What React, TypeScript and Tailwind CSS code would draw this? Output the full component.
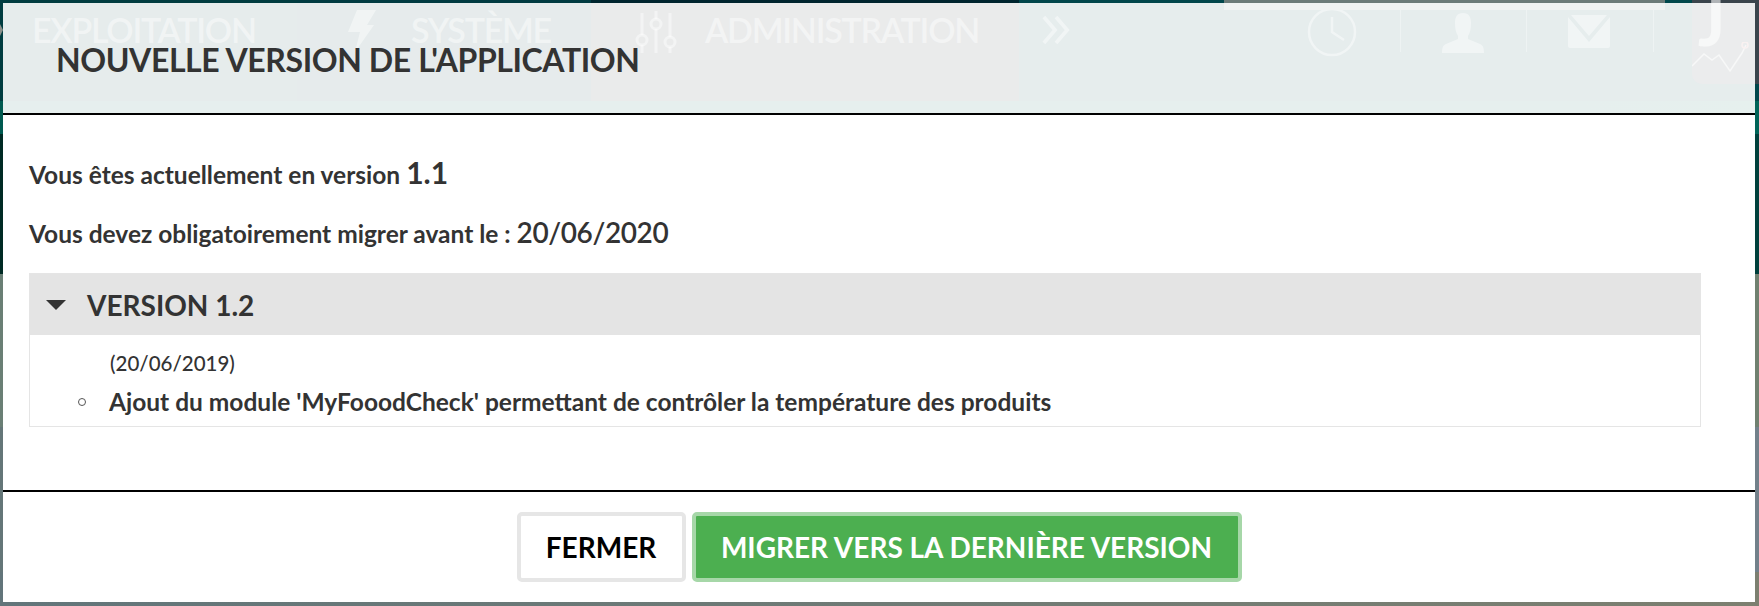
const navCellClass = 'flex items-start h-full';
const navTextClass = 'text-[34px] leading-[40px] tracking-[-1.25px] font-semibold';
const navSeparatorClass = 'mt-[10px] h-[42px] w-[1px] bg-white/35';

const BackgroundNav = () => (
  <div className="h-[101px] flex text-[rgba(255,255,255,0.45)] bg-[#00464b] relative">
    <span className="absolute left-0 top-[24px] w-0 h-0 border-y-[6px] border-y-transparent border-l-[3px] border-l-[#8a8f8a]" />
    <div className={`${navCellClass} w-[297px] pl-[32px] pt-[10px] bg-[#003c40]`}>
      <span className={navTextClass}>EXPLOITATION</span>
    </div>
    <div className={`${navCellClass} w-[294px] pl-[51px] pt-[10px] gap-[35px] bg-[#003b41]`}>
      <svg viewBox="0 0 28 42" className="w-[28px] h-[42px]" fill="currentColor">
        <path d="M9 0h19l-9 15h7L7 42l5-20H0z" />
      </svg>
      <span className={navTextClass}>SYSTÈME</span>
    </div>
    <div className={`${navCellClass} w-[428px] pl-[44px] pt-[8px] gap-[28px] bg-[linear-gradient(#00252e_3px,#2c3338_3px)]`}>
      <svg viewBox="0 0 42 46" className="w-[42px] h-[46px] mt-[1px]" fill="none" stroke="currentColor" strokeWidth="3">
        <path d="M7 4v22M7 36v8M21 2v8M21 20v24M35 4v24M35 38v6" />
        <circle cx="7" cy="31" r="5" />
        <circle cx="21" cy="15" r="5" />
        <circle cx="35" cy="33" r="5" />
      </svg>
      <span className={`${navTextClass} mt-[2px]`}>ADMINISTRATION</span>
    </div>
    <div className={`${navCellClass} w-[381px] bg-[#00464b]`}>
      <svg viewBox="0 0 30 30" className="w-[28px] h-[30px] ml-[23px] mt-[15px]" fill="none" stroke="currentColor" strokeWidth="4">
        <path d="M2 1l12 14L2 29M15 1l12 14-12 14" />
      </svg>
      <svg viewBox="0 0 50 50" className="w-[50px] h-[50px] ml-[237px] mt-[7px]" fill="none" stroke="currentColor" strokeWidth="2.5">
        <circle cx="25" cy="25" r="23" />
        <path d="M25 10v15l12 8" />
      </svg>
    </div>
    <div className={navSeparatorClass} />
    <div className={`${navCellClass} w-[125px] pl-[41px] pt-[13px] bg-[#00484c]`}>
      <svg viewBox="0 0 42 40" className="w-[42px] h-[40px]" fill="currentColor">
        <path d="M21 0c6 0 8 4 8 10 0 6-1 10-3 13v3l12 5c3 1 4 4 4 9H0c0-5 1-8 4-9l12-5v-3c-2-3-3-7-3-13 0-6 2-10 8-10z" />
      </svg>
    </div>
    <div className={navSeparatorClass} />
    <div className={`${navCellClass} w-[126px] pl-[41px] pt-[15px] bg-[#00484c]`}>
      <svg viewBox="0 0 42 33" className="w-[42px] h-[33px]" fill="currentColor">
        <path d="M0 2l21 25L42 2v29a2 2 0 0 1-2 2H2a2 2 0 0 1-2-2z" />
        <path d="M3 0h36L21 21z" />
      </svg>
    </div>
    <div className={navSeparatorClass} />
    <div className="w-[38px] bg-[#00484c]" />
    <div className="w-[67px] h-[84px] bg-[#3a444c] rounded-bl-[10px] text-white/60 overflow-hidden">
      <span className="block pl-[6px] text-[62px] leading-[44px] font-black">J</span>
      <svg viewBox="0 0 67 34" className="w-[67px] h-[34px] -mt-[2px]" fill="none" stroke="currentColor" strokeWidth="1.5">
        <path d="M0 24l12-12 8 6 7-5 11 16 12-18 4-8" />
        <circle cx="53" cy="3" r="3" stroke="#c77" />
      </svg>
    </div>

    {/* barre claire qui passe devant le menu, en haut a droite */}
    <div className="absolute left-[1224px] top-0 w-[441px] h-[10px] bg-[#6c7a78]" />
  </div>
);

const App = () => {
  return (
    <div className="relative w-[1759px] h-[606px] overflow-hidden bg-[#6c7c7c] font-['Lato','Liberation_Sans',sans-serif] text-[#333]">
      <BackgroundNav />
      <div className="h-[33px] bg-[linear-gradient(90deg,#005a50,#006458)]" />
      <div className="h-[140px] bg-[linear-gradient(90deg,#002a24,#00403c)]" />
      <div className="h-[153px] bg-[linear-gradient(90deg,#6a7f75,#708070)]" />
      <div className="h-[145px] bg-[linear-gradient(90deg,#647678,#72808a)]" />
      <div className="h-[34px] bg-[linear-gradient(90deg,#62757a,#7c7f70)]" />

      <div className="absolute left-[3px] top-[3px] w-[1752px] h-[599px] flex flex-col">
        <div className="h-[112px] shrink-0 bg-white/90 border-b-2 border-black pl-[53px] pt-[37px]">
          <h1 className="text-[32px] leading-[40px] tracking-[-0.4px] font-bold text-[#333]">NOUVELLE VERSION DE L'APPLICATION</h1>
        </div>

        <div className="flex-1 bg-white px-[26px] pt-[43px]">
          <p className="text-[24.5px] leading-[28px] font-bold">
            Vous êtes actuellement en version <span className="text-[30px]">1.1</span>
          </p>
          <p className="mt-[29px] text-[24.5px] leading-[28px] font-bold">
            Vous devez obligatoirement migrer avant le : <span className="text-[28px] tracking-[-0.4px] font-semibold">20/06/2020</span>
          </p>

          <div className="mt-[25px] w-[1672px] border border-[#e5e5e5]">
            <div className="h-[61px] bg-[#e4e4e4] flex items-center pl-[16px]">
              <span className="w-0 h-0 border-x-[10px] border-x-transparent border-t-[10px] border-t-[#333]" />
              <span className="ml-[21px] text-[28px] font-bold">VERSION 1.2</span>
            </div>
            <div className="h-[91px] pt-[14px] pl-[80px]">
              <div className="text-[20.5px] leading-[28px] font-medium">(20/06/2019)</div>
              <div className="flex items-center mt-[10px] text-[24.5px] leading-[30px] font-bold">
                <span className="w-[8px] h-[8px] -ml-[32px] mr-[23px] rounded-full border border-[#555]" />
                Ajout du module 'MyFooodCheck' permettant de contrôler la température des produits
              </div>
            </div>
          </div>
        </div>

        <div className="h-[112px] shrink-0 bg-white border-t-2 border-black flex justify-center gap-[6px] pt-[20px]">
          <button className="w-[169px] h-[70px] rounded-[5px] border-[4px] border-[#e6e6e6] bg-white text-black text-[28px] font-bold">
            FERMER
          </button>
          <button className="w-[550px] h-[70px] rounded-[5px] border-[4px] border-[#a6d7a8] bg-[#4caf50] text-white text-[28px] font-bold">
            MIGRER VERS LA DERNIÈRE VERSION
          </button>
        </div>
      </div>
    </div>
  );
};

export default App;
